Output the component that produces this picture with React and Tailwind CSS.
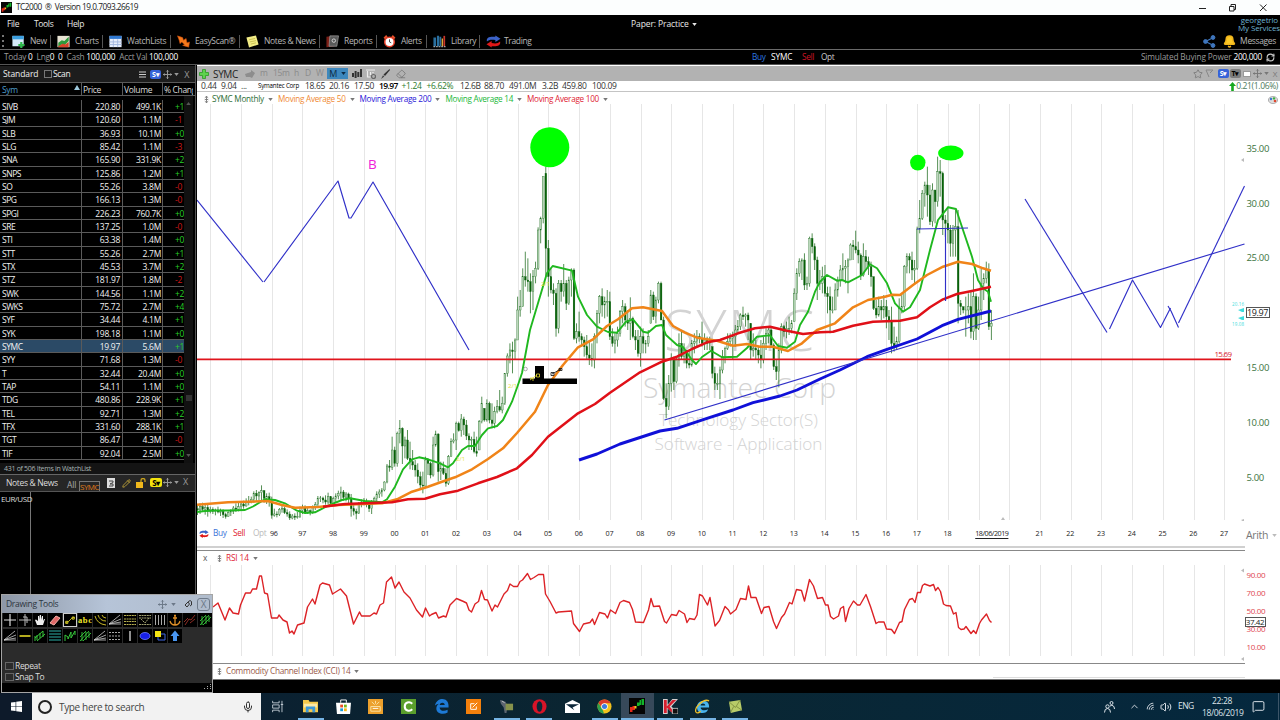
import React from 'react';
import {
  Bell,
  ChevronUp,
  Eraser,
  Mic,
  MessageSquare,
  Pencil,
  RefreshCw,
  Star,
  Volume2,
  Wifi,
} from 'lucide-react';

const WATCHLIST = [
  ['SIVB', '220.80', '499.1K', '+1'],
  ['SJM', '120.60', '1.1M', '-1'],
  ['SLB', '36.93', '10.1M', '+0'],
  ['SLG', '85.42', '1.1M', '-3'],
  ['SNA', '165.90', '331.9K', '+2'],
  ['SNPS', '125.86', '1.2M', '+1'],
  ['SO', '55.26', '3.8M', '-0'],
  ['SPG', '166.13', '1.3M', '-0'],
  ['SPGI', '226.23', '760.7K', '+0'],
  ['SRE', '137.25', '1.0M', '-0'],
  ['STI', '63.38', '1.4M', '+0'],
  ['STT', '55.26', '2.7M', '+1'],
  ['STX', '45.53', '3.7M', '+2'],
  ['STZ', '181.97', '1.8M', '-2'],
  ['SWK', '144.56', '1.1M', '+2'],
  ['SWKS', '75.72', '2.7M', '+4'],
  ['SYF', '34.44', '4.1M', '+1'],
  ['SYK', '198.18', '1.1M', '+0'],
  ['SYMC', '19.97', '5.6M', '+1'],
  ['SYY', '71.68', '1.3M', '-0'],
  ['T', '32.44', '20.4M', '+0'],
  ['TAP', '54.11', '1.1M', '+0'],
  ['TDG', '480.86', '228.9K', '+1'],
  ['TEL', '92.71', '1.3M', '+2'],
  ['TFX', '331.60', '288.1K', '+1'],
  ['TGT', '86.47', '4.3M', '-0'],
  ['TIF', '92.04', '2.5M', '+0'],
];

// Monthly bars: [high, low, close], in thirds of a pixel below BAR_TOP. Open is the previous close.
const BAR_TOP = 110;
const BAR_STEP = 2.561;
const BARS = [
  // 1993
  [1185, 1215, 1200], [1180, 1212, 1190], [1178, 1205, 1198], [1182, 1214, 1192], [1185, 1220, 1204],
  // 1994
  [1190, 1210, 1198], [1192, 1212, 1204], [1196, 1216, 1200], [1190, 1210, 1206], [1196, 1218, 1204], [1198, 1224, 1214], [1208, 1226, 1220], [1204, 1220, 1208], [1198, 1218, 1204], [1188, 1212, 1194], [1180, 1206, 1198], [1178, 1204, 1190],
  // 1995
  [1176, 1200, 1182], [1172, 1196, 1188], [1165, 1190, 1176], [1158, 1186, 1178], [1160, 1180, 1168], [1144, 1178, 1150], [1140, 1172, 1158], [1144, 1170, 1148], [1126, 1170, 1142], [1140, 1178, 1165], [1150, 1182, 1160], [1148, 1190, 1175],
  // 1996
  [1160, 1226, 1216], [1196, 1220, 1212], [1204, 1222, 1214], [1194, 1218, 1198], [1188, 1208, 1196], [1190, 1212, 1208], [1198, 1220, 1212], [1204, 1230, 1224], [1212, 1228, 1218], [1210, 1230, 1222], [1206, 1226, 1220], [1190, 1224, 1202],
  // 1997
  [1184, 1212, 1192], [1186, 1210, 1206], [1194, 1212, 1202], [1198, 1216, 1208], [1186, 1212, 1190], [1176, 1200, 1184], [1158, 1190, 1166], [1158, 1176, 1164], [1160, 1180, 1170], [1156, 1184, 1176], [1148, 1182, 1160], [1158, 1190, 1180],
  // 1998
  [1160, 1186, 1166], [1150, 1176, 1158], [1142, 1168, 1150], [1130, 1170, 1146], [1140, 1172, 1162], [1146, 1174, 1152], [1148, 1184, 1164], [1152, 1220, 1196], [1180, 1216, 1204], [1196, 1228, 1210], [1176, 1212, 1184], [1168, 1192, 1178],
  // 1999
  [1164, 1186, 1174], [1166, 1192, 1182], [1174, 1206, 1196], [1170, 1212, 1180], [1160, 1182, 1166], [1144, 1176, 1152], [1138, 1164, 1146], [1134, 1160, 1140], [1114, 1144, 1116], [1062, 1120, 1068], [1050, 1085, 1072], [980, 1080, 1020],
  // 2000
  [1010, 1070, 1060], [965, 1070, 970], [930, 1000, 955], [952, 1062, 1008], [980, 1045, 990], [960, 1050, 1045], [995, 1078, 1055], [1020, 1080, 1065], [1050, 1100, 1080], [1060, 1120, 1100], [1085, 1135, 1125], [1085, 1150, 1128],
  // 2001
  [1040, 1130, 1050], [1045, 1095, 1060], [1055, 1105, 1095], [980, 1100, 1005], [962, 1010, 972], [970, 1115, 1085], [1055, 1110, 1075], [1055, 1095, 1090], [1075, 1130, 1120], [1035, 1125, 1040], [985, 1040, 995], [970, 1000, 990],
  // 2002
  [935, 1020, 940], [935, 965, 962], [912, 980, 927], [920, 975, 945], [930, 990, 978], [970, 1020, 990], [980, 1020, 988], [965, 1030, 1025], [980, 1040, 1030], [930, 1020, 935], [860, 940, 880], [895, 935, 930],
  // 2003
  [868, 935, 880], [875, 940, 930], [880, 955, 940], [890, 955, 905], [870, 910, 890], [840, 905, 900], [860, 910, 880], [790, 885, 790], [730, 800, 738], [700, 760, 720], [695, 790, 725], [685, 750, 690],
  // 2004
  [560, 690, 600], [540, 620, 590], [475, 590, 500], [425, 530, 510], [445, 545, 515], [490, 610, 545], [480, 600, 500], [455, 520, 475], [352, 480, 360], [320, 400, 325], [200, 340, 190], [170, 500, 415],
  // 2005
  [390, 560, 500], [475, 550, 540], [520, 585, 550], [535, 680, 655], [510, 670, 520], [510, 575, 545], [462, 560, 520], [510, 600, 580], [500, 585, 510], [475, 560, 480], [475, 690, 685], [640, 700, 665],
  // 2006
  [605, 695, 680], [670, 710, 690], [680, 740, 710], [675, 750, 735], [690, 765, 745], [700, 770, 750], [670, 775, 680], [600, 700, 610], [555, 640, 560], [535, 620, 585], [560, 625, 575], [540, 620, 575],
  // 2007
  [545, 690, 680], [655, 710, 700], [670, 730, 690], [650, 710, 670], [600, 680, 605], [570, 640, 590], [580, 650, 630], [600, 660, 640], [562, 690, 625], [620, 685, 680], [660, 720, 690], [660, 740, 730],
  // 2008
  [650, 770, 680], [655, 730, 700], [690, 730, 700], [660, 710, 680], [540, 640, 555], [545, 630, 620], [560, 640, 570], [515, 580, 520], [515, 630, 630], [620, 870, 865], [820, 925, 890], [795, 900, 820],
  // 2009
  [730, 845, 750], [740, 840, 815], [740, 820, 750], [670, 770, 700], [660, 750, 740], [700, 760, 720], [720, 775, 760], [720, 775, 765], [690, 770, 700], [670, 730, 695], [660, 710, 680], [670, 700, 685],
  // 2010
  [635, 710, 700], [670, 720, 690], [680, 720, 700], [680, 720, 695], [710, 805, 790], [770, 840, 820], [790, 840, 820], [770, 867, 780], [720, 790, 740], [710, 760, 715], [670, 720, 695], [670, 710, 685],
  // 2011
  [665, 750, 680], [645, 710, 660], [630, 670, 650], [610, 660, 615], [590, 630, 620], [610, 650, 615], [608, 690, 630], [640, 750, 720], [670, 740, 715], [690, 750, 720], [710, 760, 735], [690, 775, 750],
  // 2012
  [680, 760, 700], [655, 720, 670], [650, 700, 660], [655, 710, 705], [700, 780, 770], [750, 810, 785], [700, 832, 720], [640, 730, 650], [645, 680, 665], [635, 685, 655], [620, 675, 655], [630, 670, 640],
  // 2013
  [535, 635, 550], [475, 570, 490], [445, 500, 455], [445, 510, 450], [430, 540, 525], [500, 540, 520], [380, 530, 385], [370, 430, 410], [400, 480, 450], [440, 570, 520], [480, 540, 520], [470, 550, 500],
  // 2014
  [465, 560, 550], [530, 610, 560], [530, 670, 600], [560, 610, 600], [520, 600, 540], [500, 560, 510], [465, 530, 480], [430, 510, 475], [450, 520, 470], [445, 550, 450], [400, 450, 405], [390, 450, 410],
  // 2015
  [362, 430, 420], [395, 460, 435], [430, 510, 495], [400, 500, 440], [420, 480, 455], [440, 495, 470], [455, 530, 500], [500, 600, 595], [570, 625, 615], [560, 620, 590], [570, 630, 600], [555, 625, 590],
  // 2016
  [570, 655, 620], [600, 690, 635], [590, 730, 700], [650, 725, 710], [680, 720, 695], [565, 700, 595], [550, 610, 590], [465, 600, 470], [430, 490, 440], [430, 490, 450], [425, 510, 480], [450, 520, 475],
  // 2017
  [350, 480, 357], [270, 370, 325], [240, 330, 250], [215, 290, 225], [170, 320, 255], [225, 345, 335], [220, 350, 240], [240, 340, 275], [140, 290, 185], [150, 260, 190], [185, 375, 330], [315, 380, 340],
  // 2018
  [290, 400, 360], [345, 440, 400], [345, 440, 360], [300, 440, 350], [300, 640, 580], [570, 615, 590], [590, 610, 600], [560, 680, 600], [550, 640, 590], [540, 685, 665], [490, 690, 560], [550, 690, 655],
  // 2019
  [560, 660, 600], [475, 630, 520], [490, 570, 505], [455, 520, 480], [460, 660, 650], [600, 690, 640],
];

const MA14 =
  '197,512 205,511 215,510.5 228,510.5 245,510 253,506.5 265,499.3 275,500 285,503.3 297,510.7 305,513 315,512.3 328,505.7 342,500 350,498.3 365,501 382,502.3 387,499.3 395,486.7 403,469.3 412,459.3 419,457.3 428,459.3 440,463.3 448,467.3 453,463.3 462,450 468,446 475,446 482,435 488,428.3 497,426 503,420 512,401.7 519,382 522,373 530,330 547,273 552.7,266 572,270.7 578,296.7 587,315 597,326.7 608,332 617,332.7 626,321.7 633,319.3 643,331.7 648,332.7 656,326 662,325 666,335 677,345 683,347 692,360 696,364 702,357 711,350.7 722,357.3 737,356.7 747,348 757,336.7 770,335.3 778,346 787,347.7 795,341.7 800,325 808,311.7 815,291.7 820,281.7 827,275 837,280.7 842,280 848,282.3 862,275 870,264.3 877,268.3 887,283.3 895,303.3 903,311.7 910,307.3 920,290 930,250 938,220 948,207.3 956,209 963,230 972,256.7 978,280 983,288.3 988,291.7 991,301.7';
const MA50 =
  '197,504.7 228,502.3 268,501 282,505 295,507.7 318,507 338,505 382,503.3 397,499.3 412,491.7 428,486.7 442,481.7 455,477.3 472,469.3 488,459 503,448.3 517,433 535,411.7 548,385 563,365 578,347.3 593,339.3 607,326 618,319.3 632,308.3 643,307.3 662,311 673,326 685,332.7 697,337.7 717,340.7 733,345.7 747,344 760,346.7 773,346.7 788,351 802,343.3 817,330 835,323.3 853,307.3 868,300 885,296.7 892,294.7 900,295 913,285 927,275 943,266.7 958,261.7 972,264 983,268.3 991,270.7';
const MA100 =
  '323,506.7 345,504 392,502.3 408,499.3 425,498.7 440,494.3 458,490.7 478,483.3 497,477 517,468.3 532,455 548,436.7 563,425 578,413.3 595,404 610,392.7 640,372.3 662,361.7 677,356.7 692,349 707,342.3 720,340 738,333.3 755,328.3 770,326.7 787,330.7 803,334 820,332.3 833,331.7 853,325.7 873,321.7 900,320.7 917,317.3 930,307.3 943,299.3 957,294 973,290.7 991,286.7';
const MA200 =
  '579,460 597,454 620,444 660,431 677,428.3 707,418.3 733,410 753,402.7 780,396 797,390 820,379 840,370 867,356.7 887,349.3 917,339 942,325.7 958,319.3 991,311';
const RSI =
  '213,607 218,603 225,620 229.5,608 233,613 238.5,614 240.5,605 245.5,593 250.5,593 252.5,589 256.5,589 259.5,576 261.5,576 264.5,593 267.5,594 271.5,618 277.5,618 279,615 283,620 287,622 289.5,633 292,631 294,634 297.5,625 304,623 307.5,607 312.5,599 315,604 320,585 322.5,583 329.5,585 332.5,594 340.5,589 346.5,596 353.5,624 359.5,612 361.5,616 370,616 374,613 376.5,614 380,605 383.5,603 386.5,582 391.5,577 395,588 399,582 404,592 410,598 416.5,610 422.5,617 425.5,608 429.5,616 431.5,614.5 436,612.5 438.5,618 443.5,616 446,617 450,605 456.5,598.5 463.5,601.5 466.5,603 469,610 471.5,612 475,604 478.5,601.5 481.5,590.5 484.5,599.5 487.5,600 492,611 495,605 497.5,607 504,594 507.5,590.5 510,584 513.5,586.5 517.5,586.5 520,581.5 522.5,580 527.5,573.5 530.5,579.5 534,577.5 538.5,574.5 543.5,574.5 545.5,594 550,601.5 556,613 558.5,612 571.5,611 573.5,623.5 579.5,631.5 583.5,624 590,622.5 592.5,619 594.5,624.5 599.5,612.5 605,614 607.5,618 610.5,610 615.5,613.5 620,602.5 623.5,600.5 629.5,602.5 632.5,609.5 635.5,622 643.5,622.5 648.5,610 651,598.5 653.5,606.5 659.5,606 664.5,621.5 666.5,623 671.5,614.5 676.5,615.5 679,610.5 684.5,614 687,622.5 689.5,618.5 694.5,619.5 697,615 699.5,594.5 702.5,596 707.5,605 710,597.5 715,626 719.5,620.5 725,606.5 728.5,610 730.5,614 736,609.5 740.5,598.5 746,599.5 748.5,586 751,597.5 756,597.5 761.5,613.5 764,607.5 769,606.5 773.5,621.5 776.5,628.5 781.5,617.5 784.5,614 789.5,602.5 792,604 796.5,589.5 801.5,590.5 804.5,601 809.5,579.5 813.5,586 817.5,598.5 822.5,597.5 825.5,605 828,605 830.5,616.5 833.5,619 838.5,616 840.5,608.5 843.5,606.5 845.5,621.5 849,608.5 853.5,601 857.5,605 860,605 866,594.5 870.5,606.5 876,623.5 878.5,622 884,622 886.5,629 891.5,629.5 894.5,633.5 899.5,622.5 902,621.5 904.5,609.5 909.5,599.5 912.5,598.5 915,602.5 917.5,592.5 920.5,592.5 922.5,585.5 924.5,584 930,586 933.5,584.5 935.5,590.5 938,587.5 940.5,591.5 943.5,604 946,605.5 950.5,606 953.5,614 956,612.5 958.5,627.5 961,629.5 964,629 966,626.5 971,633.5 973.5,630.5 976,633.5 979.5,623.5 981.5,620 986.5,614 989.5,620.5 991.5,622.5';

const TREND_LINES = [
  '197,200 263,282',
  '264,282 338,181 349,218 351,218 373,182 469,350',
  '664.5,420 1244.5,244',
  '917,229 968,228',
  '945.5,229 945.5,301',
  '1025,199 1107,332.5',
  '1109.5,329 1132.5,280 1160.5,327.5 1170.5,308',
  '1168,306 1171,311 1178.5,327.5',
  '1178.5,323 1244.5,186',
];

const GRID = Array.from({ length: 34 }, (_, i) => 210.3 + i * 30.73);
const YEARS = ['97', '98', '99', '00', '01', '02', '03', '04', '05', '06', '07', '08', '09', '10', '11', '12', '13', '14', '15', '16', '17', '18', '', '', '21', '22', '23', '24', '25', '26', '27'];

const GridLines = ({ top, bottom }) =>
  GRID.map((x) => <line key={x} x1={Math.round(x) + 0.5} x2={Math.round(x) + 0.5} y1={top} y2={bottom} stroke="#e6e6e6" />);

const Bars = () => {
  const startX = 210.3 - 5 * BAR_STEP;
  const toY = (v) => BAR_TOP + v / 3;
  return BARS.map(([high, low, close], i) => {
    const x = startX + i * BAR_STEP;
    const open = i ? BARS[i - 1][2] : close - 4;
    const down = close > open;
    const top = Math.max(Math.min(open, close), high);
    const bottom = Math.min(Math.max(open, close), low);
    return (
      <g key={i}>
        <line x1={x} x2={x} y1={toY(high)} y2={toY(low)} stroke="#1d6b1d" strokeWidth="0.75" />
        <rect
          x={x - 0.8}
          y={toY(top)}
          width="1.7"
          height={Math.max((bottom - top) / 3, 0.8)}
          fill={down ? '#066006' : '#bcd8bc'}
          stroke="#17691a"
          strokeWidth="0.35"
        />
      </g>
    );
  });
};

const Caret = ({ className = '' }) => (
  <svg className={`w-[5px] h-[3px] shrink-0 ${className}`} viewBox="0 0 6 4" fill="currentColor">
    <path d="M0 0h6L3 4z" />
  </svg>
);

const MoveIcon = ({ className = '' }) => (
  <svg className={`w-[9px] h-[9px] shrink-0 ${className}`} viewBox="0 0 12 12" fill="none" stroke="currentColor" strokeWidth="1.3">
    <path d="M6 0v12M0 6h12M4.5 2L6 .5 7.5 2M4.5 10L6 11.5 7.5 10M2 4.5L.5 6 2 7.5M10 4.5L11.5 6 10 7.5" />
  </svg>
);

const SwapIcon = ({ className = '' }) => (
  <svg className={className} viewBox="0 0 16 13">
    <path d="M1 6.500C0 2 4 1 10 1.500V0l5.500 3.500L10 7V5C6 4 3 4.500 1 6.500z" fill="#3b62c8" />
    <path d="M15 6.500c1 4.500-3 5.500-9 5V13L.5 9.500 6 6v2c4 1 7 .5 9-1.500z" fill="#e01818" />
  </svg>
);

const PinMark = () => (
  <svg className="w-[5px] h-[7px] shrink-0" viewBox="0 0 5 7" fill="none" stroke="#777" strokeWidth="0.9">
    <path d="M2.500 0v7M.8 1.800L2.500.3l1.700 1.500M.8 5.200l1.700 1.500 1.700-1.500M.8 3.500h3.400" />
  </svg>
);

const TcLogo = ({ className }) => (
  <svg className={className} viewBox="0 0 16 16">
    <path d="M0 0h16v16H0z" fill="#050505" />
    <path d="M1 9h2.500v5H1zM3.500 8H6v4H3.500z" fill="#e32a1a" />
    <path d="M5.500 8h2v2.500h-2z" fill="#e8c81e" />
    <path d="M8 4.500h2.500V8H8zM10.500 2H12v5h-1.500zM12.500 1H15v6h-2.500z" fill="#12b42a" />
  </svg>
);

const toolbarIcons = {
  new: (
    <>
      <path d="M0 1h13v12H0z" fill="#d6ebfa" />
      <path d="M0 1h13v4H0z" fill="#3b9fe0" />
      <path d="M9 8h2.500v2.300H14v2.400h-2.500V15H9v-2.300H6.800v-2.400H9z" fill="#2eb84a" />
    </>
  ),
  charts: (
    <>
      <path d="M0 1h14v13H0z" fill="#e9e4d4" />
      <path d="M1 9l4-3 3 1 5-5v5l-5 5-3-1-4 3z" fill="#2f9a3c" />
      <path d="M1 13l5-3 3 1 4-3v6H1z" fill="#d8432a" />
    </>
  ),
  watch: (
    <>
      <path d="M0 1h14v13H0z" fill="#e6edfa" />
      <path d="M0 1h14v3.500H0z" fill="#2f78d0" />
      <path d="M0 8h14M0 11h14M4.500 5v9M9.500 5v9" stroke="#9eb4dc" />
    </>
  ),
  scan: <path d="M0 1l6 2 1 3 3-2 1 5 3-1-1 6-7-2 2-1-3-3-2 2-1-4z" fill="#f47a1c" stroke="#c9480c" strokeWidth=".6" />,
  notes: (
    <>
      <path d="M0 3l11-2.500L14 11 3 14.500z" fill="#f2ec86" />
      <path d="M3 5.500l7-1.500M4 8l7-1.500M5 10.500l6-1.500" stroke="#b8ac3c" strokeWidth=".8" />
    </>
  ),
  reports: (
    <>
      <path d="M0 2l9-1v12l-9 1z" fill="#7c2018" />
      <path d="M4 1h10l-2 12H3z" fill="#5a5a5a" stroke="#aaa" strokeWidth=".7" />
      <circle cx="8.500" cy="6.500" r="2" fill="none" stroke="#ddd" />
    </>
  ),
  alerts: (
    <>
      <path d="M1 4l3-3M13 4l-3-3" stroke="#e8502a" strokeWidth="2.500" />
      <circle cx="7" cy="8" r="5.500" fill="#fff" stroke="#e8402a" strokeWidth="1.800" />
      <path d="M7 5v3l2 1" stroke="#333" fill="none" />
    </>
  ),
  library: (
    <>
      <path d="M0 3h3v10H0zM4 1h2.500v12H4zM7 2h2v11H7z" fill="#2a6f9e" />
      <path d="M9.500 4h1.500v9H9.500z" fill="#e0b040" />
      <path d="M11.500 1h2v12h-2z" fill="#c8372a" />
      <path d="M0 13.500h14" stroke="#ddd" strokeDasharray="2 1" />
    </>
  ),
};

const TOOLBAR = [
  { icon: 'new', label: 'New', width: 'w-[45px]' },
  { icon: 'charts', label: 'Charts', width: 'w-[52px]' },
  { icon: 'watch', label: 'WatchLists', width: 'w-[68px]' },
  { icon: 'scan', label: 'EasyScan®', width: 'w-[69px]' },
  { icon: 'notes', label: 'Notes & News', width: 'w-[80px]' },
  { icon: 'reports', label: 'Reports', width: 'w-[57px]' },
  { icon: 'alerts', label: 'Alerts', width: 'w-[50px]' },
  { icon: 'library', label: 'Library', width: 'w-[53px]' },
  { icon: 'trading', label: 'Trading', width: 'w-[60px]' },
];

const TitleBar = () => (
  <div className="h-[15px] bg-[#fcfefe] flex items-center text-[8.3px] text-[#222] shrink-0">
    <TcLogo className="w-[11px] h-[11px] ml-[1px]" />
    <span className="ml-[4px] tracking-[-0.5px]">TC2000 &nbsp;® &nbsp;Version 19.0.7093.26619</span>
    <svg className="w-[90px] h-[12px] ml-auto" viewBox="1190 1 90 12" fill="none" stroke="#222" strokeWidth="1">
      <path d="M1199 7.500h7" />
      <path d="M1229.500 5.500h4.500v4.500h-4.500zM1231 5.500v-2h4.500v5h-1.500" />
      <path d="M1260 3.500l6.500 6.500M1266.500 3.500l-6.500 6.500" />
    </svg>
  </div>
);

const MenuBar = () => (
  <div className="h-[18px] flex items-center text-[8.5px] text-[#e8e8e8] shrink-0">
    <span className="w-[27px] pl-[7px]">File</span>
    <span className="w-[34px] pl-[7px]">Tools</span>
    <span className="w-[570px] pl-[6px]">Help</span>
    <span className="flex items-center gap-[3px] tracking-[-0.1px]">
      Paper: Practice <Caret />
    </span>
    <div className="ml-auto self-start w-[60px] pt-[1px] text-right text-[8px] leading-[7.500px] text-[#6fb4d2] tracking-[-0.15px]">
      <div className="pr-[2px]">georgetrio</div>
      <div>My Services</div>
    </div>
  </div>
);

const ToolBar = () => (
  <div className="h-[17px] flex items-center text-[8.5px] text-[#b9b9b9] border-b border-[#6a6a6a] shrink-0">
    <div className="w-[6px] flex justify-center">
      <svg className="w-[2px] h-[12px]" viewBox="0 0 2 12" fill="#777"><path d="M0 0h2v2H0zM0 5h2v2H0zM0 10h2v2H0z" /></svg>
    </div>
    {TOOLBAR.map((item, i) => (
      <div key={item.label} className={`${item.width} h-[13px] flex items-center shrink-0 pl-[6px] whitespace-nowrap ${i < 8 ? 'border-r border-[#555]' : ''}`}>
        {item.icon === 'trading' ? (
          <SwapIcon className="w-[15px] h-[13px] mr-[3px] shrink-0" />
        ) : (
          <svg className="w-[13px] h-[13px] mr-[5px] shrink-0" viewBox="0 0 14 15">{toolbarIcons[item.icon]}</svg>
        )}
        <span>{item.label}</span>
      </div>
    ))}
    <div className="ml-auto flex items-center pr-[4px]">
      <svg className="w-[13px] h-[13px] mr-[7px]" viewBox="0 0 13 13" fill="#3f76bd" stroke="#3f76bd">
        <path d="M2.500 6.500l8-4M2.500 6.500l8 4" strokeWidth="1.300" />
        <circle cx="2.500" cy="6.500" r="1.900" /><circle cx="10" cy="2.500" r="1.900" /><circle cx="10" cy="10.500" r="1.900" />
      </svg>
      <Bell className="w-[13px] h-[13px] mr-[4px] text-[#f2b61c] fill-[#fbc928]" strokeWidth={3} />
      <span>Messages</span>
    </div>
  </div>
);

const AccountBar = () => (
  <div className="h-[15px] flex items-center text-[8.3px] text-[#9a9a9a] border-b border-[#555] shrink-0 whitespace-nowrap">
    <div className="w-[752px] flex gap-[4px] pl-[4px] tracking-[-0.25px]">
      <span>Today <b className="font-medium text-white">0</b></span>
      <span>Lng<b className="font-medium text-white">0&nbsp; 0</b></span>
      <span>Cash <b className="font-medium text-white">100,000</b></span>
      <span>Acct Val <b className="font-medium text-white">100,000</b></span>
    </div>
    <span className="w-[19px] text-[#2d78e0]">Buy</span>
    <span className="w-[31px] text-white tracking-[-0.1px]">SYMC</span>
    <span className="w-[19px] text-[#cc1424]">Sell</span>
    <span className="text-[#ccc]">Opt</span>
    <span className="ml-auto tracking-[-0.15px]">Simulated Buying Power <b className="font-medium text-white tracking-[-0.3px]">200,000</b></span>
    <RefreshCw className="w-[9px] h-[9px] ml-[4px] mr-[5px] text-[#ccc]" strokeWidth={3} />
  </div>
);

const WatchListPanel = () => (
  <div className="h-[410px] flex flex-col border-r border-[#555] shrink-0">
    <div className="h-[16px] mt-[1px] bg-[#1d1d1d] flex items-center text-[8.5px] text-[#eee] px-[3px] shrink-0">
      <span className="w-[41px] font-medium tracking-[-0.1px]">Standard</span>
      <span className="w-[8px] h-[8px] border border-[#777] mr-[1px]" />
      <span>Scan</span>
      <div className="ml-auto flex items-center text-[#999]">
        <svg className="w-[7px] h-[7px] mr-[4px]" viewBox="0 0 7 7" stroke="#ccc"><path d="M0 1h7M0 3.500h7M0 6h7" /></svg>
        <span className="w-[11px] h-[9px] rounded-[2px] bg-[#3563d8] text-white text-[7px] font-bold leading-[9px] text-center mr-[2px]">S▾</span>
        <MoveIcon className="mr-[2px]" />
        <Caret className="mr-[5px]" />
        <span className="text-[9px] mr-[3px]">X</span>
      </div>
    </div>
    <div className="h-[14px] border-t border-b border-[#5a5a5a] flex text-[8.5px] leading-[14px] text-[#ddd] shrink-0 overflow-hidden">
      <span className="w-[82px] pl-[2px] text-[#4e9dcb] flex border-r border-[#5a5a5a]">
        Sym <svg className="w-[6px] h-[5px] ml-auto mt-[2px] mr-[1px]" viewBox="0 0 6 5" fill="#9cc8dc"><path d="M3 0l3 5H0z" /></svg>
      </span>
      <span className="w-[41px] pl-[1px] border-r border-[#5a5a5a]">Price</span>
      <span className="w-[40px] pl-[1px] border-r border-[#5a5a5a]">Volume</span>
      <span className="w-[30px] pl-[1px] overflow-hidden whitespace-nowrap">% Change</span>
    </div>
    <div className="flex flex-1 min-h-0">
      <div className="w-[184px] pt-[4px]">
        {WATCHLIST.map(([sym, price, volume, pct]) => (
          <div
            key={sym}
            className={`h-[13.330px] flex border-b border-[#5a5a5a] text-[8.5px] leading-[13px] text-[#f2f2f2] tracking-[-0.3px] ${sym === 'SYMC' ? 'bg-[#2b4a66]' : ''}`}
          >
            <span className="w-[82px] pl-[2px] border-r border-[#5a5a5a] tracking-[-0.45px]">{sym}</span>
            <span className="w-[41px] pr-[2px] text-right border-r border-[#5a5a5a]">{price}</span>
            <span className="w-[40px] pr-[1px] text-right border-r border-[#5a5a5a]">{volume}</span>
            <span className={`w-[21px] pl-[12px] overflow-hidden ${pct[0] === '+' ? 'text-[#28d028]' : 'text-[#d01818]'}`}>{pct}</span>
          </div>
        ))}
      </div>
      <div className="w-[9px] bg-[#111] flex flex-col items-center text-[#555] pt-[6px] pb-[6px]">
        <Caret className="rotate-180" />
        <span className="w-[6px] h-[6px] bg-[#333] mt-[290px]" />
        <Caret className="mt-auto" />
      </div>
    </div>
    <div className="h-[12px] bg-[#141414] border-b border-[#666] text-[7px] leading-[11px] text-[#a9b4b4] pl-[4px] tracking-[-0.3px] shrink-0">
      431 of 506 Items in WatchList
    </div>
  </div>
);

const NotesPanel = () => (
  <div className="flex-1 flex flex-col border-r border-[#555]">
    <div className="h-[17px] bg-[#262626] border-b border-[#555] flex items-center text-[8.5px] text-[#ddd] shrink-0">
      <span className="w-[61px] pl-[6px] whitespace-nowrap">Notes &amp; News</span>
      <span className="w-[18px] pl-[6px] pt-[4px] text-[8.5px] text-[#aaa] tracking-[-0.1px]">All</span>
      <span className="w-[21px] h-[10px] mt-[5px] border border-b-0 border-[#777] text-[8px] leading-[9px] text-[#e07c1a] tracking-[-0.5px] overflow-hidden">SYMC</span>
      <svg className="w-[8px] h-[10px] ml-[7px]" viewBox="0 0 8 10"><path d="M0 0h8v10H0z" fill="#ddd" /><path d="M2 3h4v1.500L3 6h3v2H2" stroke="#444" fill="none" /></svg>
      <Pencil className="w-[9px] h-[9px] ml-[7px] text-[#d8b83c]" />
      <svg className="w-[10px] h-[10px] ml-[5px]" viewBox="0 0 10 10"><path d="M5 5V2.500a2 2 0 014 0V4" stroke="#c9a21c" fill="none" strokeWidth="1.300" /><path d="M0 4h7v6H0z" fill="#f0b81c" /></svg>
      <span className="w-[12px] h-[9px] mb-[2px] ml-[4px] rounded-[2px] bg-[#f4e40c] text-black text-[8px] font-bold leading-[9px] text-center">S▾</span>
      <MoveIcon className="ml-[1px] mb-[2px] text-[#999]" />
      <Caret className="ml-[2px] mb-[2px] text-[#999]" />
      <span className="ml-[4px] mb-[3px] text-[9px] text-[#999]">X</span>
    </div>
    <div className="flex-1 w-[31px] border-r border-[#777] text-[8px] text-[#ddd] leading-[13px] pl-[1px] tracking-[-0.45px]">EUR/USD</div>
  </div>
);

const ChartHeader = () => (
  <div className="h-[15px] mt-[1px] bg-[#b2b2b2] flex items-center text-[8.5px] text-[#8b8b8b] shrink-0">
    <svg className="w-[10px] h-[10px] ml-[2px]" viewBox="0 0 10 10"><path d="M3.500 .5h3v3h3v3h-3v3h-3v-3h-3v-3h3z" fill="#5fd24e" stroke="#2b9a24" strokeWidth=".8" /></svg>
    <span className="w-[32px] ml-[4px] text-[10px] text-[#222]">SYMC</span>
    <svg className="w-[10px] h-[8px]" viewBox="0 0 10 8" fill="#8d8d8d"><path d="M0 4l6-2V0l4 3-3 5-2-1-4 0z" /></svg>
    <span className="ml-[5px] w-[13px]">m</span>
    <span className="w-[21px]">15m</span>
    <span className="w-[11px]">h</span>
    <span className="w-[11px]">D</span>
    <span className="w-[11px]">W</span>
    <span className="w-[21px] h-[11px] bg-[#3d87bd] text-[#0d2a44] flex items-center justify-center gap-[4px] text-[9px]">M <Caret /></span>
    <svg className="w-[10px] h-[9px] ml-[4px]" viewBox="0 0 10 9" fill="#333"><path d="M0 4h2v4H0zM2.600 2h2v7h-2zM5.300 3h2v5h-2zM8 0h2v8H8z" /></svg>
    <svg className="w-[10px] h-[10px] ml-[4px]" viewBox="0 0 10 10" fill="none" stroke="#eee" strokeWidth="1.200"><path d="M0 1h9M1.500 2v6h3M4.500 3v3M7 3v1" /><circle cx="7.500" cy="7.500" r="2" stroke="#666" /></svg>
    <svg className="w-[9px] h-[10px] ml-[5px]" viewBox="0 0 9 10"><path d="M8.500 0L9 1 4 7 2.500 5.500z" fill="#333" /><path d="M2 6.200L3.400 7.600 0 10z" fill="#444" /></svg>
    <Eraser className="w-[10px] h-[10px] ml-[6px] text-[#777]" />
    <div className="ml-auto flex items-center text-[#777]">
      <Star className="w-[10px] h-[10px]" />
      <svg className="w-[9px] h-[9px] ml-[2px]" viewBox="0 0 9 9" fill="none" stroke="#888"><path d="M1 1l3 7M1 1l7 0-3 3" /></svg>
      <span className="w-[11px] h-[9px] ml-[4px] rounded-[2px] bg-[#3563d8] text-white text-[7px] font-bold leading-[9px] text-center">S▾</span>
      <span className="w-[11px] h-[9px] ml-[1px] rounded-[2px] bg-[#7c7c7c] text-black text-[7px] font-bold leading-[9px] text-center">T▾</span>
      <span className="w-[8px] h-[6px] ml-[2px] bg-white border border-[#999]" />
      <MoveIcon className="ml-[2px]" />
      <Caret className="ml-[2px]" />
      <span className="ml-[4px] mr-[3px] text-[8px]">X</span>
    </div>
  </div>
);

const QUOTE = [
  ['0.44', 'w-[20px]'],
  ['9.04', 'w-[20px]'],
  ['...', 'w-[17px]'],
  ['Symantec Corp', 'w-[47px] text-[6.2px] text-black tracking-[-0.2px]'],
  ['18.65', 'w-[24px]'],
  ['20.16', 'w-[25px]'],
  ['17.50', 'w-[25px]'],
  ['19.97', 'w-[22.500px] text-black font-semibold tracking-[-0.6px]'],
  ['+1.24', 'w-[25px] text-[#2c7a2c]'],
  ['+6.62%', 'w-[33.500px] text-[#2c7a2c]'],
  ['12.6B', 'w-[24px]'],
  ['88.70', 'w-[25px]'],
  ['491.0M', 'w-[33px]'],
  ['3.2B', 'w-[20px]'],
  ['459.80', 'w-[30px]'],
  ['100.09', 'w-[30px]'],
];

const QuoteRow = () => (
  <div className="h-[11px] bg-white border-b border-[#c4c4c4] flex items-center text-[8.5px] text-[#333] pl-[4px] shrink-0 whitespace-nowrap">
    {QUOTE.map(([text, cls]) => (
      <span key={text} className={`${cls} shrink-0`}>{text}</span>
    ))}
    <span className="ml-auto flex items-center text-[#4c7a5c] pr-[2px]">
      <svg className="w-[7px] h-[9px]" viewBox="0 0 7 9"><path d="M3.500 0L7 4H4.800v5H2.200V4H0z" fill="#16a81e" /></svg>
      0.21(1.06%)
    </span>
  </div>
);

const LEGEND = [
  ['SYMC Monthly', 'w-[66px] text-[#2c6e35]'],
  ['Moving Average 50', 'w-[81.500px] text-[#f08a34]'],
  ['Moving Average 200', 'w-[86px] text-[#2a20d8]'],
  ['Moving Average 14', 'w-[81.500px] text-[#22b83a]'],
  ['Moving Average 100', 'w-[86px] text-[#e02434]'],
];

const Legend = () => (
  <div className="h-[12px] flex items-center text-[8.2px] pl-[7px] pt-[3px] shrink-0 whitespace-nowrap">
    <PinMark />
    <div className="flex ml-[3px]">
      {LEGEND.map(([text, cls]) => (
        <span key={text} className={`${cls} flex items-center gap-[4px] tracking-[-0.28px]`}>
          {text} <Caret className="text-[#777]" />
        </span>
      ))}
    </div>
    <svg className="w-[10px] h-[8px] ml-auto mr-[2px]" viewBox="0 0 10 8"><ellipse cx="5" cy="4" rx="4.600" ry="3.600" fill="#ddd" stroke="#888" strokeWidth=".6" /><circle cx="3" cy="3" r="1.200" fill="#3a7ad0" /><circle cx="6" cy="2.400" r="1.200" fill="#38b040" /><circle cx="7" cy="5" r="1.300" fill="#e04830" /></svg>
  </div>
);

const PricePlot = () => (
  <svg className="w-[1047.500px] h-[417px] shrink-0 tracking-normal" viewBox="197 104 1047.500 417">
    <GridLines top={104} bottom={520} />
    <g fill="#d3d3d3" textAnchor="middle" fontFamily="'Open Sans', 'Noto Sans', sans-serif">
      <text x="739" y="351" fontSize="57" fontWeight="300" textLength="150">SYMC</text>
      <text x="739.5" y="398" fontSize="28" fontWeight="300" textLength="193" lengthAdjust="spacingAndGlyphs">Symantec Corp</text>
      <text x="738.5" y="426" fontSize="17" fontWeight="300" textLength="159" lengthAdjust="spacingAndGlyphs">Technology Sector(S)</text>
      <text x="738.5" y="449.5" fontSize="17" fontWeight="300" textLength="168" lengthAdjust="spacingAndGlyphs">Software - Application</text>
    </g>
    <Bars />
    <line x1="197" x2="1231" y1="359.3" y2="359.3" stroke="#e0141c" strokeWidth="1.7" />
    <g fill="none" strokeLinejoin="round">
      <polyline points={MA14} stroke="#1fb81f" strokeWidth="1.9" />
      <polyline points={MA50} stroke="#f08418" strokeWidth="2.5" />
      <polyline points={MA100} stroke="#e01018" strokeWidth="2.5" />
      <polyline points={MA200} stroke="#1010d8" strokeWidth="2.9" />
      {TREND_LINES.map((points) => <polyline key={points} points={points} stroke="#3030c8" strokeWidth="1.15" />)}
    </g>
    <ellipse cx="549.8" cy="147.3" rx="19.5" ry="20" fill="#00ff00" />
    <ellipse cx="917.8" cy="162.6" rx="7.7" ry="7.9" fill="#00ff00" />
    <ellipse cx="950.8" cy="153" rx="12.7" ry="7.6" fill="#00ff00" />
    <path d="M522.500 378.500h54.500v5.500h-54.500zM535 366h9v13h-9z" fill="#000" />
    <path d="M530 380l7-5M530 378h3v3M536.500 374h3v3h-3z" stroke="#e8e030" strokeWidth=".8" fill="none" />
    <path d="M552 374l9-5M551 372.500h3v3h-3zM559 368.500h3v2h-3z" stroke="#111" strokeWidth=".8" fill="none" />
    <circle cx="525.500" cy="369" r="1.800" stroke="#888" fill="none" strokeWidth=".7" />
    <g fill="#e6e23c" fontSize="6" fontFamily="'Open Sans', sans-serif">
      <text x="508" y="388">2/1</text>
      <text x="456" y="461">2/1</text>
      <text x="541" y="286">2/1</text>
    </g>
    <text x="368" y="169" fontSize="13.500" fill="#f020d8" fontFamily="'Open Sans', sans-serif">B</text>
    <text x="1214.500" y="357" fontSize="8" fill="#d82430" textLength="17.500" fontFamily="'Open Sans', sans-serif">15.69</text>
    <g fill="#3fdcdc">
      <path d="M1244 308v4h-2l-4-2zM1244 316v4h-2l-4-2z" />
      <text x="1232" y="306" fontSize="4.500" textLength="12">20.16</text>
      <text x="1232" y="326" fontSize="4.500" textLength="12">19.08</text>
    </g>
    <path d="M1244 158v4l-3-2z" fill="#bbb" />
    <path d="M1001 520h4l-2-3zM1244 519v3l-3-2z" fill="#bbb" />
  </svg>
);

const PriceAxis = () => (
  <div className="flex-1 pt-[17px] text-[9.5px] text-[#3c7440] pl-[2px]">
    {['35.00', '30.00', '25.00', '', '15.00', '10.00', '5.00'].map((label, i) => (
      <div key={i} className="h-[54.850px] flex items-center">
        {label || <span className="-ml-[1px] h-[11px] w-[24px] border border-[#555] bg-white text-[#222] text-[9px] leading-[10px] text-center tracking-[-0.35px]">19.97</span>}
      </div>
    ))}
  </div>
);

const TimeAxis = () => (
  <div className="h-[25px] flex items-center text-[7.2px] text-[#222] shrink-0">
    <SwapIcon className="w-[10px] h-[8px] ml-[2px] shrink-0" />
    <span className="w-[20px] ml-[4px] text-[8.3px] text-[#3a72d8] shrink-0">Buy</span>
    <span className="w-[20px] text-[8.3px] text-[#e02434] shrink-0">Sell</span>
    <span className="w-[17px] text-[8.3px] text-[#bbb] shrink-0">Opt</span>
    <span className="w-[17px] shrink-0">96</span>
    <div className="flex shrink-0">
      {YEARS.map((year, i) => (
        <span key={i} className="w-[30.730px] text-center whitespace-nowrap shrink-0 tracking-[-0.1px]">
          {i === 22 ? <span className="inline-block w-[58px] tracking-[-0.5px]"><u className="underline-offset-2">18/06/2019</u></span> : year}
        </span>
      ))}
    </div>
    <span className="ml-auto pt-[4px] pr-[3px] text-[10.5px] text-[#777] flex items-center gap-[4px] shrink-0">Arith <Caret className="text-[#bbb]" /></span>
  </div>
);

const RsiPanel = () => (
  <div className="h-[114px] flex shrink-0">
    <div className="w-[1047.500px] flex flex-col border-t border-b border-[#888]">
      <div className="h-[14px] flex items-center text-[8.3px] text-[#e02434] pl-[6px]">
        <span className="w-[14px] text-[#555]">x</span>
        <PinMark />
        <span className="ml-[4px] mr-[4px] tracking-[-0.15px]">RSI 14</span>
        <Caret className="text-[#777]" />
      </div>
      <svg className="w-full h-[97px]" viewBox="197 565 1047.500 97">
        <GridLines top={565} bottom={656} />
        <polyline points={RSI} fill="none" stroke="#dc2226" strokeWidth="1.4" strokeLinejoin="round" />
        <path d="M1244 568.500v4l-3-2zM1244 657v4l-3-2z" fill="#bbb" />
      </svg>
    </div>
    <div className="flex-1 relative pt-[16.500px] pl-[2px] text-[8px] text-[#e04450]">
      {['90.00', '70.00', '50.00', '30.00', '10.00'].map((v) => (
        <div key={v} className="h-[17.900px] flex items-center">{v}</div>
      ))}
      <span className="absolute left-0 top-[67px] w-[21px] h-[9.500px] border border-[#555] bg-white text-[#222] text-[8px] leading-[8px] text-center">37.42</span>
    </div>
  </div>
);

const ChartPanel = () => (
  <div className="flex-1 ml-[1px] bg-white flex flex-col min-w-0">
    <ChartHeader />
    <QuoteRow />
    <Legend />
    <div className="flex shrink-0">
      <PricePlot />
      <PriceAxis />
    </div>
    <TimeAxis />
    <div className="w-[1047.500px] h-[2px] bg-[#d0d0d0] mb-[2px] shrink-0" />
    <RsiPanel />
    <div className="h-[16px] flex items-center text-[8.3px] text-[#9a5a4a] pl-[20px] border-b border-[#777] shrink-0">
      <PinMark />
      <span className="ml-[4px] mr-[4px] tracking-[-0.3px]">Commodity Channel Index (CCI) 14</span>
      <Caret className="text-[#777]" />
      <span className="ml-auto mr-[35px] mt-[12px] w-[252px] h-[1px] bg-[#ddd]" />
    </div>
    <div className="flex-1 bg-black" />
  </div>
);

const DRAW_ICONS = [
  <path d="M7 1v12M1 7h12" stroke="#ddd" strokeWidth="1.200" />,
  <path d="M7 1v12M1 7h12M5 4h4v6" stroke="#bbb" strokeWidth="1" fill="none" />,
  <path d="M4 12L2 7l1-.5L5 8V3h1v4l.8-5H8v5l1-4h1v5l1-2h1l-2 6z" fill="#eee" />,
  <path d="M2 10l6-7 4 2-6 7z" fill="#e06868" stroke="#f4b0a8" />,
  <path d="M2 10l3-1 4-4 3-1M2 8.500h2.500V11H2zM9.500 3.500H12V6H9.500z" stroke="#e8dc28" fill="none" />,
  <text x="0" y="10" fontSize="8.500" fontWeight="bold" fontFamily="'Liberation Serif', serif" fill="#f0e428" textLength="14">abc</text>,
  <path d="M2 3q2 8 11 9M5 2q2 6 8 6M9 2q1 3 4 3" stroke="#c8b828" fill="none" />,
  <path d="M1 11l11-9M1 11l12-5M1 11l12-2M1 11h12" stroke="#ccc" fill="none" strokeWidth=".8" />,
  <path d="M1 2.500h12M1 6h12M1 8.500h12M1 11.500h12" stroke="#b8b050" strokeDasharray="2 .6" />,
  <path d="M1 2.500h12M1 11.500h12M1 5h12M3 6l4 4 4-5" stroke="#a0a070" fill="none" strokeDasharray="2 .6" />,
  <path d="M2.500 2v10M5.500 2v10M8.500 2v10M11.500 2v10" stroke="#aaa" />,
  <path d="M7 2v10M5 5h4M2 8q1 4 5 4t5-4M6 2.500h2" stroke="#e09028" strokeWidth="1.300" fill="none" />,
  <path d="M2 12l4-6 2 1 4-5M1 9l4-4M7 10l5-4" stroke="#8c2c24" fill="none" />,
  <path d="M2 12l9-10M5 12l8-8M2 8l6-6M4 3v9M8 3v8M11 3v6" stroke="#38c83c" fill="none" strokeWidth=".9" />,
  <path d="M1 11l11-9M1 11l12-5M1 11l12-2M1 11h12" stroke="#ccc" fill="none" strokeWidth=".8" />,
  <path d="M1.500 7h11" stroke="#f0e428" strokeWidth="1.500" />,
  <path d="M2 12V7M4 11V6M2 9l8-7M7 9V4M10 8V2M4 12l8-7" stroke="#38c83c" fill="none" />,
  <path d="M1 2h12M1 5h12M1 8h12M1 11h12" stroke="#2cb0a8" />,
  <path d="M2 12V6l3 2v2l3-7v6l4-7v4" stroke="#38c83c" fill="none" />,
  <path d="M2 12l9-10M5 12l8-8M2 8l6-6M4 3v9M8 3v8M11 3v6" stroke="#38c83c" fill="none" strokeWidth=".9" />,
  <path d="M1 11l11-9M1 11l12-5M1 11l12-2M1 11h12" stroke="#ccc" fill="none" strokeWidth=".8" />,
  <path d="M1 3.500h12M1 10.500h12M1 7h12" stroke="#aaa" strokeDasharray="2 1" />,
  <path d="M7 2v10" stroke="#ddd" strokeWidth="1.300" />,
  <ellipse cx="7" cy="7" rx="5" ry="3.500" fill="#1820e8" stroke="#7080ff" strokeWidth=".8" />,
  <><path d="M5 5h7v6H5z" fill="none" stroke="#4068e0" /><path d="M2 2h6v6H2z" fill="#f4e414" /></>,
  <path d="M7 1.500L11.500 7H9v5H5V7H2.500z" fill="#4a96f0" />,
];

const DrawingTools = () => (
  <div className="absolute left-[1px] top-[594px] w-[212px] h-[99px] bg-[#2b2b2b] border border-[#a4a4a4] flex flex-col text-[8.5px]">
    <div className="h-[18px] bg-linear-to-r from-[#8d97a6] via-[#b6c4d8] to-[#b0bccc] flex items-center text-[#2b3440] pl-[4px] shrink-0">
      <span className="tracking-[-0.3px]">Drawing Tools</span>
      <div className="ml-auto flex items-center text-[#6c7888]">
        <MoveIcon />
        <Caret className="ml-[4px]" />
        <svg className="w-[8px] h-[8px] ml-[8px]" viewBox="0 0 8 8" fill="none" stroke="#333"><path d="M1 5l3-3 1.500 2L3 7zM4 2l2-1.500 1.500 1V5L6 6" /></svg>
        <span className="w-[13px] h-[13px] ml-[5px] mr-[2px] rounded-[3px] border border-[#707c8c] text-[10px] leading-[11px] text-center">X</span>
      </div>
    </div>
    <div className="grid grid-cols-14 gap-x-[1px] gap-y-[2px] w-[209px] ml-[1px]">
      {DRAW_ICONS.map((icon, i) => (
        <div key={i} className={`h-[14px] bg-black ${i === 4 ? 'border border-[#ccc]' : ''}`}>
          <svg className="w-full h-full tracking-normal" viewBox="0 0 14 14">{icon}</svg>
        </div>
      ))}
    </div>
    <div className="mt-auto mb-[1px] pl-[3px] text-[8.5px] leading-[10.500px] text-[#ddd]">
      {['Repeat', 'Snap To'].map((label) => (
        <div key={label} className="flex items-center">
          <span className="w-[9px] h-[8px] border border-[#666] mr-[1px]" />
          {label}
        </div>
      ))}
    </div>
    <div className="h-[9px] bg-black flex justify-end items-end pr-[1px] pb-[2px] shrink-0">
      <svg className="w-[7px] h-[6px]" viewBox="0 0 7 6" fill="#aaa"><path d="M0 4h1v1H0zM3 4h1v1H3zM6 4h1v1H6zM3 2h1v1H3zM6 2h1v1H6zM6 0h1v1H6z" /></svg>
    </div>
  </div>
);

const TASKS = [
  { open: false, art: <path d="M2 1v2.500h8V1M2 15v-2.500h8V15M2 6h8v4H2zM13.500 1v14M12 5.500h3" stroke="#d8e0e8" fill="none" /> },
  { open: true, art: <><path d="M0 1h6l1 2h9v11H0z" fill="#f4c84c" /><path d="M1 5h14v4H1z" fill="#fbe9a8" /><path d="M3 8h10v6h-3v-3H6v3H3z" fill="#3c98d8" /></> },
  { open: false, art: <><path d="M5 4V1h6v3" fill="none" stroke="#fff" /><path d="M0 4h16l-1 12H1z" fill="#fff" /><path d="M4.500 6h3v3h-3z" fill="#e84c24" /><path d="M8.500 6h3v3h-3z" fill="#78b81c" /><path d="M4.500 10h3v3h-3z" fill="#189cd8" /><path d="M8.500 10h3v3h-3z" fill="#f8b414" /></> },
  { open: false, art: <><path d="M0 0h16v16H0z" fill="#eca02c" /><path d="M3 8h10v5H3zM4 3l3 3M12 3L9 6M8 2v3" stroke="#fbe2a4" fill="none" /><path d="M5 10h6" stroke="#fff" /></> },
  { open: false, art: <><path d="M0 0h16v16H0z" fill="#5a9e2c" /><path d="M12 5C9 2 4 3.500 4 8s5 6 8 3" stroke="#fff" strokeWidth="2.200" fill="none" /></> },
  { open: false, art: <path d="M1 7C2 2 6 0 9 0c4 0 6.500 3 6.500 7v2H6c0 3 4 5 8.500 2.500v3C9 17.500 2.500 15 2.500 10c0-2 1-4 3-5C4 5 2 6 1 7zm5-.5h5.500C11.500 3 6.500 3 6 6.500z" fill="#1e7ad6" /> },
  { open: false, art: <><path d="M0 0h16v16H0z" fill="#f4800c" /><path d="M9 5H5v6h6V8M7 9l5-5" stroke="#fff" fill="none" /></> },
  { open: true, art: <><path d="M1 1l6 2 2 4-1 8H6L5 9 2 5z" fill="#5b6470" /><path d="M7 5h8v7H7z" fill="#86924c" /><path d="M3 2l3 2" stroke="#ccc" /></> },
  { open: true, art: <><ellipse cx="8" cy="8" rx="7.500" ry="7.800" fill="#d81428" /><ellipse cx="8" cy="8" rx="3" ry="5.500" fill="#0b2638" /></> },
  { open: false, art: <><path d="M0 5l8-4 8 4v10H0z" fill="#fff" /><path d="M1 5.500h14L8 9l2 3z" fill="#0b2638" /></> },
  { open: true, art: <><circle cx="8" cy="8" r="7.500" fill="#f2c21c" /><path d="M1.500 4.200A7.500 7.500 0 0114.500 4.500H8L5 9z" fill="#dc3c2c" /><path d="M1.500 4.200L6 11.500 7.500 15.500A7.500 7.500 0 011.500 4.200z" fill="#2fa04c" /><circle cx="8" cy="8" r="3.500" fill="#fff" /><circle cx="8" cy="8" r="2.700" fill="#3c7ce0" /></> },
  { open: true, active: true, art: null },
  { open: true, art: <><path d="M0 0h5v6l5-6h6L9 8l7 7h-6L5 10v6H0z" fill="#d8d0d0" /><path d="M1 1h3v7l6-7h4L7 8l5 6H9L4 9v6H1z" fill="#d82030" /><path d="M10 10h6v6h-6z" fill="#111" stroke="#ddd" strokeWidth=".8" /></> },
  { open: true, art: <><path d="M2 8C3 3 6 2 9 2c4 0 6 2 6 6v1H6c0 3 4 4 8 2-1 3-3 4-6 4-4 0-6-3-6-7zm4-1h5c0-3-5-3-5 0z" fill="#4ab4ec" /><path d="M1 14C-1 9 9-1 15 2M1 14q2 2 5-1" stroke="#f0c028" strokeWidth="1.400" fill="none" /></> },
  { open: true, art: <><path d="M1 3l12-2 2 11-12 3z" fill="#b8cc68" /><path d="M1 3l7 6 5-8M3 14l3-6M15 12L9 8" stroke="#7c8c3c" fill="none" strokeWidth=".9" /></> },
];

const TaskBar = () => (
  <div className="h-[27px] bg-linear-to-r from-[#0b1d30] via-[#0a2632] to-[#05283e] flex items-stretch shrink-0">
    <div className="w-[32px] flex items-center justify-center bg-[#0d1a2a]">
      <svg className="w-[11px] h-[11px]" viewBox="0 0 12 12" fill="#fff"><path d="M0 1.700l5-.7v4.700H0zM5.700.9L12 0v5.700H5.700zM0 6.300h5V11l-5-.7zM5.700 6.300H12V12l-6.300-.9z" /></svg>
    </div>
    <div className="w-[229px] bg-[#f2f2f2] flex items-center text-[10px] text-[#444]">
      <span className="w-[14px] h-[14px] ml-[6px] rounded-full border-2 border-[#222]" />
      <span className="ml-[7px] mt-[1px]">Type here to search</span>
      <Mic className="ml-auto mr-[7px] w-[12px] h-[12px] text-[#333]" />
    </div>
    <div className="flex ml-[0.500px]">
      {TASKS.map((task, i) => (
        <div key={i} className={`w-[32.700px] flex flex-col items-center shrink-0 ${task.active ? 'bg-[#37495a]' : ''}`}>
          {task.active ? (
            <TcLogo className="w-[16px] h-[16px] mt-[5px]" />
          ) : (
            <svg className={`mt-[6px] ${i ? 'w-[15px] h-[15px]' : 'w-[13px] h-[15px]'}`} viewBox="0 0 16 16">{task.art}</svg>
          )}
          {task.open && <span className={`mt-auto h-[2px] bg-[#76b4e4] ${task.active ? 'w-full' : 'w-[26px]'}`} />}
        </div>
      ))}
    </div>
    <div className="ml-auto flex items-center text-[#dde4ea] text-[8.5px]">
      <svg className="w-[11px] h-[12px] mr-[14px]" viewBox="0 0 11 12" fill="none" stroke="#dde4ea"><circle cx="3.500" cy="5.500" r="1.700" /><path d="M.5 11.500q0-4 3-4t3 4" /><circle cx="7.500" cy="2" r="1.500" /><path d="M6 5q4-2 4.500 3" /></svg>
      <ChevronUp className="w-[11px] h-[11px] mr-[6px]" />
      <Wifi className="w-[10px] h-[10px] mr-[4px] rotate-[-45deg]" />
      <Volume2 className="w-[12px] h-[12px] mr-[6px]" />
      <span className="w-[24px] tracking-[-0.5px]">ENG</span>
      <div className="w-[40px] text-center leading-[12px]">
        <div>22:28</div>
        <div>18/06/2019</div>
      </div>
      <MessageSquare className="w-[13px] h-[13px] ml-[10px] mr-[13px]" strokeWidth={1.8} />
      <span className="w-[2px] h-[27px] border-l border-[#3c5568]" />
    </div>
  </div>
);

const App = () => (
  <div className="relative w-[1280px] h-[720px] bg-black overflow-hidden flex flex-col leading-none tracking-[-0.35px] font-['Open_Sans','Noto_Sans',sans-serif]">
    <TitleBar />
    <MenuBar />
    <ToolBar />
    <AccountBar />
    <div className="flex flex-1 min-h-0">
      <div className="w-[196px] flex flex-col">
        <WatchListPanel />
        <NotesPanel />
      </div>
      <ChartPanel />
    </div>
    <TaskBar />
    <DrawingTools />
  </div>
);

export default App;
